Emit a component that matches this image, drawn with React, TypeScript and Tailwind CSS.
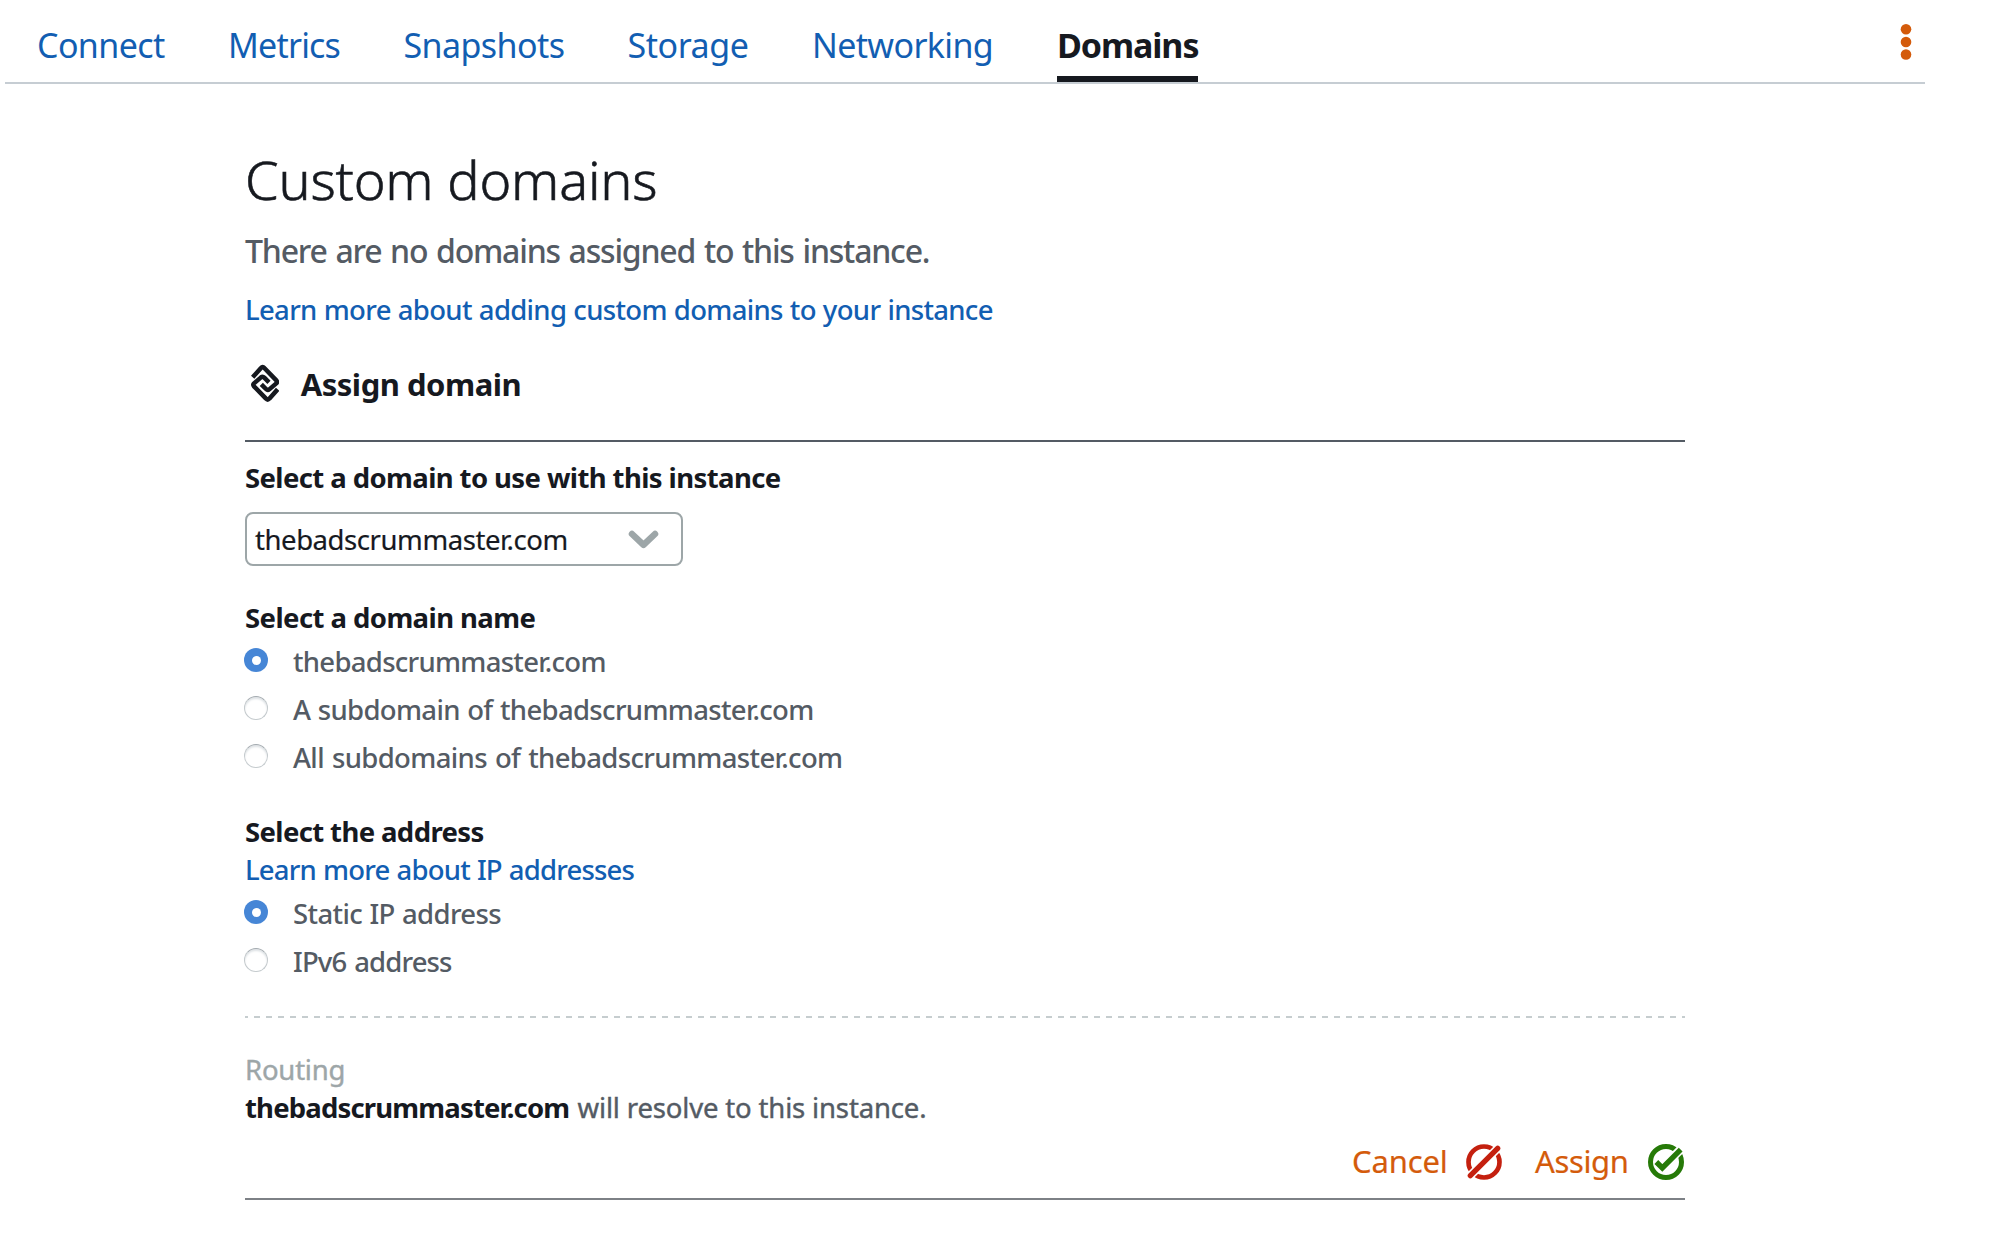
import React from "react";

const tabs = [
  { label: "Connect", box: "w-[191px] tracking-[-0.6px]" },
  { label: "Metrics", box: "w-[175.5px] tracking-[-0.8px]" },
  { label: "Snapshots", box: "w-[224px] tracking-[-0.58px]" },
  { label: "Storage", box: "w-[184.5px] tracking-[-0.44px]" },
  { label: "Networking", box: "w-[245px] tracking-[-0.64px]" },
];

const domainOptions = [
  { label: "thebadscrummaster.com", tracking: "tracking-[-0.71px]", checked: true },
  { label: "A subdomain of thebadscrummaster.com", tracking: "tracking-[-0.67px] [word-spacing:1px]", checked: false },
  { label: "All subdomains of thebadscrummaster.com", tracking: "tracking-[-0.64px] [word-spacing:1.5px]", checked: false },
];

const addressOptions = [
  { label: "Static IP address", tracking: "tracking-[-0.63px] [word-spacing:0.8px]", checked: true },
  { label: "IPv6 address", tracking: "tracking-[-0.85px] [word-spacing:1.5px]", checked: false },
];

function KebabIcon() {
  return (
    <svg viewBox="0 0 12 38" className="h-[38px] w-3 fill-[#d45b0b]">
      <circle cx="6" cy="6.3" r="5.3" />
      <circle cx="6" cy="19" r="5.3" />
      <circle cx="6" cy="31.5" r="5.3" />
    </svg>
  );
}

function DomainIcon() {
  return (
    <svg viewBox="64 43 85 116" className="h-[38.7px] w-[28.3px] fill-none stroke-[#16191f]" strokeWidth="13.5" strokeLinejoin="round">
      <path d="M69 83 L94 55 Q99 49 104 55 L140 92 Q144 97 140 101 L119 119 Q114 123 109 118 L95 104" />
      <path d="M144 119 L119 147 Q114 153 109 147 L73 110 Q69 105 73 101 L94 83 Q99 79 104 84 L118 98" />
    </svg>
  );
}

function CancelIcon() {
  return (
    <svg viewBox="0 0 108 108" className="mt-0.5 h-9 w-9 fill-none">
      <circle cx="54" cy="54" r="46.5" stroke="#c4200f" strokeWidth="14" />
      <path d="M6 102 L102 6" stroke="#fff" strokeWidth="25" />
      <path d="M13 95 L95 13" stroke="#c4200f" strokeWidth="16" strokeLinecap="round" />
    </svg>
  );
}

function AssignIcon() {
  return (
    <svg viewBox="0 0 108 108" className="mt-0.5 h-9 w-9 fill-none">
      <circle cx="54" cy="54" r="46.5" stroke="#267a08" strokeWidth="15" />
      <path d="M42 72 L106 8" stroke="#fff" strokeWidth="26" />
      <path d="M25 54 L43 72 L98 17" stroke="#267a08" strokeWidth="16" />
    </svg>
  );
}

function Radio({ label, tracking, checked }: { label: string; tracking: string; checked: boolean }) {
  return (
    <label className="flex h-12 items-center text-[27.5px] leading-[46px] font-medium text-[#545b64]">
      {checked ? (
        <span className="mb-0.5 -ml-px flex size-6 items-center justify-center rounded-full bg-[#4686d6]">
          <span className="size-[9px] rounded-full bg-white" />
        </span>
      ) : (
        <span className="mb-0.5 -ml-px size-6 rounded-full border border-[#c4cacd] border-t-[#a3aaaf] bg-white shadow-[inset_0_2px_2px_#dfe3e6]" />
      )}
      <span className={`ml-[25px] pt-0.5 ${tracking}`}>{label}</span>
    </label>
  );
}

export default function App() {
  return (
    <div className="h-[1238px] w-[2000px] overflow-hidden bg-white font-['Noto_Sans',sans-serif] whitespace-nowrap text-[#16191f]">
      <nav className="ml-[5px] flex h-[84px] w-[1920px] border-b-2 border-[#c6cdd3] pl-8 text-[34px] leading-[72px] text-[#125eb2]">
        {tabs.map((tab) => (
          <a key={tab.label} className={`h-[82px] pt-[9px] ${tab.box}`}>
            {tab.label}
          </a>
        ))}
        <a className="h-[82px] w-[141px] border-b-6 border-[#16191f] pt-[9px] font-bold tracking-[-1.09px] text-[#16191f]">
          Domains
        </a>
        <button className="mt-[23px] mr-[13px] ml-auto h-[38px]">
          <KebabIcon />
        </button>
      </nav>

      <main className="mt-[65px] ml-[245px] w-[1440px] text-[27.5px] leading-10">
        <h1 className="text-[54px] leading-[60px] font-light tracking-[-0.2px] [-webkit-text-stroke:0.6px]">Custom domains</h1>
        <p className="mt-[21px] h-10 text-[32px] leading-[42px] font-medium tracking-[-1.2px] text-[#545b64] [word-spacing:1.6px]">
          There are no domains assigned to this instance.
        </p>
        <a className="mt-5 block h-[38px] font-medium tracking-[-0.68px] text-[#125eb2] [word-spacing:0.6px]">
          Learn more about adding custom domains to your instance
        </a>

        <section className="mt-9 border-b-2 border-[#7d8186] pb-[17px]">
          <header className="flex h-[78px] items-start border-b-2 border-[#545b64] pl-[6px]">
            <DomainIcon />
            <h2 className="ml-[21.5px] text-[31px] leading-10 font-bold tracking-[-0.5px]">Assign domain</h2>
          </header>

          <h3 className="mt-4 h-[38px] font-bold tracking-[-0.6px]">Select a domain to use with this instance</h3>
          <div className="mt-4 flex h-[54px] w-[438px] items-center justify-between rounded-[8px] border-2 border-[#9da6a8] pr-[22px] pl-2">
            <span className="pt-0.5 leading-[46px] tracking-[-0.43px] [-webkit-text-stroke:0.2px]">thebadscrummaster.com</span>
            <svg viewBox="0 0 31 19" className="h-[19px] w-[31px] fill-none stroke-[#9da6a8]" strokeWidth="6.5" strokeLinecap="round" strokeLinejoin="round">
              <path d="M4 4 L15.5 14.8 L27 4" />
            </svg>
          </div>

          <h3 className="mt-8 h-[38px] font-bold tracking-[-0.57px]">Select a domain name</h3>
          <div className="mt-px">
            {domainOptions.map((option) => (
              <Radio key={option.label} {...option} />
            ))}
          </div>

          <h3 className="mt-[31px] h-[38px] font-bold tracking-[-0.62px]">Select the address</h3>
          <a className="block h-[38px] font-medium tracking-[-0.81px] text-[#125eb2] [word-spacing:0.7px]">Learn more about IP addresses</a>
          <div className="mt-px">
            {addressOptions.map((option) => (
              <Radio key={option.label} {...option} />
            ))}
          </div>

          <div className="mt-[31px] h-0.5 bg-[linear-gradient(90deg,#c6cdcf_6px,transparent_6px)] bg-[length:12px_2px] bg-[position:-3px_0]" />

          <p className="mt-8 h-[38px] tracking-[-0.2px] text-[#9da6a8] [-webkit-text-stroke:0.4px]">Routing</p>
          <p className="flex h-[38px] text-[#545b64]">
            <b className="w-[332.5px] tracking-[-0.83px] text-[#16191f]">thebadscrummaster.com</b>
            <span className="tracking-[-0.16px] [-webkit-text-stroke:0.4px]">will resolve to this instance.</span>
          </p>

          <div className="mt-[15px] flex h-10 items-center justify-end pr-px text-[31px] leading-10 text-[#d45b0b]">
            <button className="mr-[33px] flex items-center">
              <span className="w-[114px] text-left tracking-[-0.16px] [-webkit-text-stroke:0.2px]">Cancel</span>
              <CancelIcon />
            </button>
            <button className="flex items-center">
              <span className="w-[113px] text-left tracking-[-0.37px] [-webkit-text-stroke:0.2px]">Assign</span>
              <AssignIcon />
            </button>
          </div>
        </section>
      </main>
    </div>
  );
}
